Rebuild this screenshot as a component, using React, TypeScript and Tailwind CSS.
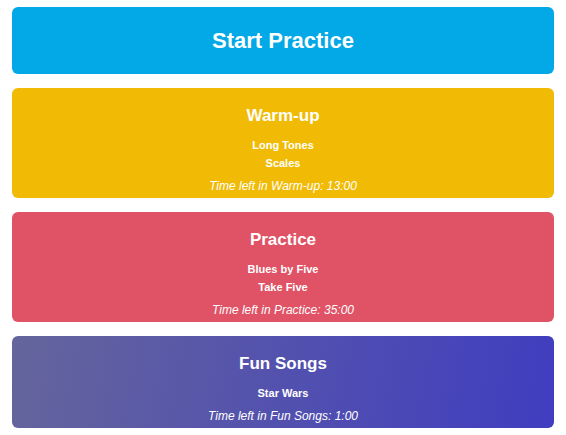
const sections = [
  {
    name: "Warm-up",
    items: ["Long Tones", "Scales"],
    time: "13:00",
    bg: "bg-[#f1bb05]",
  },
  {
    name: "Practice",
    items: ["Blues by Five", "Take Five"],
    time: "35:00",
    bg: "bg-[#e05265]",
  },
  {
    name: "Fun Songs",
    items: ["Star Wars"],
    time: "1:00",
    bg: "bg-linear-[100deg] from-[#65659c] to-[#403dc0]",
  },
];

function Section({ name, items, time, bg }: (typeof sections)[number]) {
  return (
    <div className={`flex flex-col items-center rounded-md pt-4 pb-1 text-white ${bg}`}>
      <h3 className="text-[17px] leading-6 font-bold">{name}</h3>
      <ul className="mt-2 flex flex-col items-center">
        {items.map((item) => (
          <li key={item} className="text-[11px] leading-[18px] font-bold">
            {item}
          </li>
        ))}
      </ul>
      <p className="mt-1.5 text-[12px] leading-4 italic">
        Time left in {name}: {time}
      </p>
    </div>
  );
}

export default function App() {
  return (
    <div className="flex flex-col gap-3.5 px-3 pt-[7px] font-['Liberation_Sans',Arial,sans-serif]">
      <button
        type="button"
        className="h-[67px] rounded-md bg-[#02a9e6] text-[22px] font-bold text-white"
      >
        Start Practice
      </button>
      {sections.map((s) => (
        <Section key={s.name} {...s} />
      ))}
    </div>
  );
}
